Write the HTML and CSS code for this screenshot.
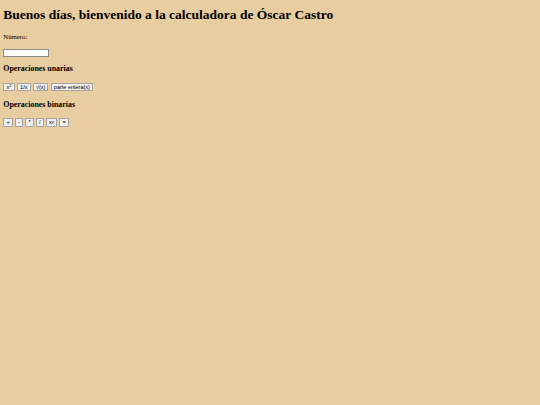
FILE: index.html
```html
<!DOCTYPE html>
<html lang="es">
<head>
<meta charset="utf-8">
<title>Calculadora</title>
<link rel="stylesheet" href="styles.css">
</head>
<body class="page">
<h1 class="title">Buenos días, bienvenido a la calculadora de Óscar Castro</h1>
<p class="field-label"><label for="numero">Número:</label></p>
<div class="field-row"><input class="number-input" id="numero" type="text"></div>
<h3 class="section-title">Operaciones unarias</h3>
<div class="button-row">
  <button class="op-btn">x<sup class="exp">2</sup></button>
  <button class="op-btn">1/x</button>
  <button class="op-btn">√(x)</button>
  <button class="op-btn">parte entera(x)</button>
</div>
<h3 class="section-title">Operaciones binarias</h3>
<div class="button-row">
  <button class="op-btn">+</button>
  <button class="op-btn">-</button>
  <button class="op-btn">*</button>
  <button class="op-btn">/</button>
  <button class="op-btn">x<sup class="exp">y</sup></button>
  <button class="op-btn">=</button>
</div>
</body>
</html>
```
FILE: styles.css
```css
html {
  background: #e8cda0;
}
.page {
  margin: 0;
  padding: 0 3.3px;
  background: #e8cda0;
  font-family: "Liberation Serif", "Times New Roman", serif;
  font-size: 6.75px;
  color: #000;
}
.title {
  font-size: 13.5px;
  font-weight: bold;
  line-height: 14.6px;
  margin: 8.3px 0 10.3px 0;
}
.field-label {
  margin: 0 0 8.3px 0;
  line-height: 7.3px;
}
.field-row {
  display: flex;
}
.number-input {
  box-sizing: border-box;
  width: 46px;
  height: 8.6px;
  margin: 0;
  padding: 0;
  border: 1px solid #8a8a8a;
  background: #fff;
}
.section-title {
  font-size: 7.9px;
  font-weight: bold;
  line-height: 8.6px;
  margin: 7.8px 0 7.3px 0;
}
.button-row {
  display: flex;
  align-items: center;
  gap: 2.3px;
  height: 11.7px;
}
.op-btn {
  box-sizing: border-box;
  height: 8.8px;
  margin: 0;
  padding: 0 2.1px;
  border: 1px solid #a4a4a4;
  border-radius: 0.8px;
  background: #efefef;
  color: #000;
  font-family: "Liberation Sans", Arial, sans-serif;
  font-size: 5.5px;
  line-height: 6.4px;
  display: flex;
  align-items: center;
}
.exp {
  font-size: 0.8em;
  line-height: 0;
  position: relative;
  top: -0.15em;
}
```
